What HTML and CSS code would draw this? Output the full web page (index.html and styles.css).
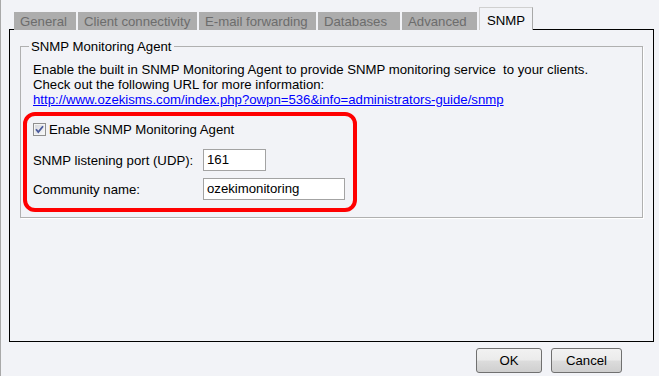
FILE: index.html
```html
<!DOCTYPE html>
<html>
<head>
<meta charset="utf-8">
<link rel="stylesheet" href="styles.css">
</head>
<body>
<div class="window">
  <div class="tabstrip">
    <div class="strip-lead"></div>
    <div class="tab t-general">General</div>
    <div class="tab t-client">Client connectivity</div>
    <div class="tab t-email">E-mail forwarding</div>
    <div class="tab t-db">Databases</div>
    <div class="tab t-adv">Advanced</div>
    <div class="tab active">SNMP</div>
    <div class="strip-fill"></div>
  </div>
  <div class="panel">
    <fieldset class="group">
      <legend>SNMP Monitoring Agent</legend>
      <p class="intro">Enable the built in SNMP Monitoring Agent to provide SNMP monitoring service&nbsp; to your clients.<br>Check out the following URL for more information:<br><a href="#">http://www.ozekisms.com/index.php?owpn=536&amp;info=administrators-guide/snmp</a></p>
      <div class="highlight">
        <div class="check">
          <span class="checkbox"><svg width="13" height="13" viewBox="0 0 13 13"><defs><linearGradient id="cb" x1="0" y1="0" x2="1" y2="1"><stop offset="0" stop-color="#d6d8de"/><stop offset="1" stop-color="#f7f7f9"/></linearGradient></defs><rect x="0.5" y="0.5" width="12" height="12" fill="#f4f4f4" stroke="#8f8f8f"/><rect x="2" y="2" width="9" height="9" fill="url(#cb)"/><path d="M3 6.2 L5.3 9 L10 3.2" fill="none" stroke="#4a5a9c" stroke-width="1.8"/></svg></span>
          <span>Enable SNMP Monitoring Agent</span>
        </div>
        <div class="fields">
          <span class="label">SNMP listening port (UDP):</span>
          <span class="input short">161</span>
          <span class="label">Community name:</span>
          <span class="input long">ozekimonitoring</span>
        </div>
      </div>
    </fieldset>
  </div>
  <div class="buttons">
    <button class="btn ok">OK</button>
    <button class="btn cancel">Cancel</button>
  </div>
</div>
</body>
</html>
```
FILE: styles.css
```css
html, body {
  margin: 0;
}
body {
  background: #f2f3f7;
  font: 13.2px/15px "Liberation Sans", Arial, sans-serif;
  color: #000;
  border-left: 1px solid #a9a9a9;
  height: 376px;
  box-sizing: border-box;
  overflow: hidden;
}
.window {
  padding: 7px 5px 0 8px;
}
.tabstrip {
  display: flex;
  align-items: flex-end;
  height: 23px;
}
.strip-lead {
  width: 5px;
  align-self: stretch;
  box-sizing: border-box;
  border-bottom: 1px solid #000;
}
.strip-fill {
  flex: 1;
  align-self: stretch;
  box-sizing: border-box;
  border-bottom: 1px solid #000;
}
.tab {
  height: 18px;
  box-sizing: border-box;
  line-height: 19px;
  padding-left: 6px;
  margin-right: 2px;
  background: #adadad;
  color: #6c6c6c;
  white-space: nowrap;
  overflow: hidden;
}
.t-general { width: 62px; }
.t-client { width: 119px; }
.t-email { width: 117px; }
.t-db { width: 82px; }
.t-adv { width: 75px; }
.tab.active {
  width: 54px;
  height: 23px;
  line-height: 18px;
  padding: 4px 0 0 7px;
  margin-right: 0;
  background: #f2f3f7;
  color: #000;
  border: 1px solid #d0d0d0;
  border-bottom: 0;
  border-right-color: #a8a8a8;
}
.panel {
  height: 312px;
  box-sizing: border-box;
  border: 1px solid #000;
  border-top: 0;
  padding: 0 10px;
  overflow: hidden;
}
.group {
  margin: 9px 0 0 0;
  padding: 0 0 5px 0;
  border: 1px solid #b0b0b0;
  box-shadow: 1px 1px 0 #fff;
  min-width: 0;
}
.group legend {
  margin-left: 8px;
  padding: 0 2px;
  line-height: 15px;
}
.intro {
  margin: 8px 0 0 12px;
}
.intro a {
  color: #0000ff;
  text-decoration: underline;
}
.highlight {
  margin: 5px 0 0 2px;
  width: 334px;
  box-sizing: border-box;
  border: 4px solid #ff0000;
  border-radius: 12px;
  padding: 7px 0 8px 6px;
}
.check {
  display: flex;
  align-items: center;
  height: 13px;
}
.checkbox {
  display: block;
  width: 13px;
  height: 13px;
  margin-right: 3px;
}
.checkbox svg {
  display: block;
}
.fields {
  display: grid;
  grid-template-columns: 170px auto;
  row-gap: 7px;
  align-items: center;
  margin-top: 13px;
}
.input {
  display: block;
  height: 22px;
  box-sizing: border-box;
  border: 1px solid #a3a3a3;
  background: #fff;
  line-height: 20px;
  padding-left: 3px;
}
.input.short { width: 63px; }
.input.long { width: 142px; }
.buttons {
  display: flex;
  justify-content: flex-end;
  gap: 9px;
  margin: 6px 32px 0 0;
}
.btn {
  height: 25px;
  box-sizing: border-box;
  border: 1px solid #707070;
  border-radius: 3px;
  background: linear-gradient(#f2f2f2 0%, #ebebeb 48%, #dcdcdc 52%, #cfcfcf 100%);
  font: 13.2px/15px "Liberation Sans", Arial, sans-serif;
  color: #000;
  padding: 0;
}
.btn.ok { width: 66px; }
.btn.cancel { width: 71px; }
```
